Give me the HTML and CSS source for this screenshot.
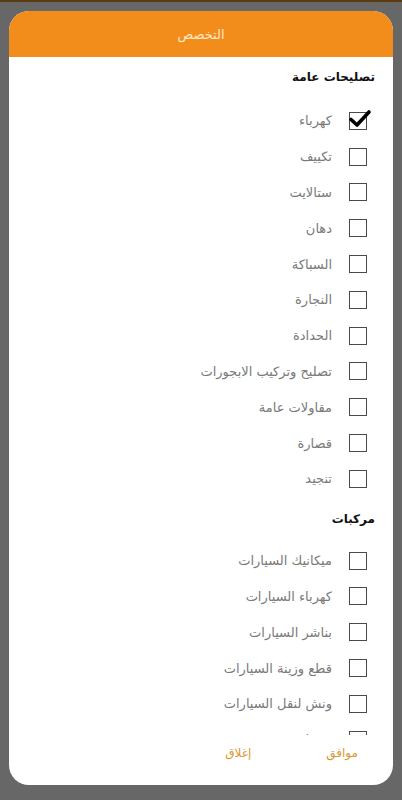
FILE: index.html
```html
<!DOCTYPE html>
<html lang="ar" dir="rtl">
<head>
  <meta charset="UTF-8" />
  <meta name="viewport" content="width=device-width, initial-scale=1.0" />
  <title>التخصص</title>
  <link rel="stylesheet" href="styles.css">
</head>
<body>
  <div class="statusbar"></div>

  <div class="dialog">
    <div class="header">التخصص</div>

    <div class="list">
      <h2 class="section">تصليحات عامة</h2>
      <label class="row"><span class="box checked"><svg viewBox="0 0 24 24" width="24" height="24"><path d="M3 12.5 L9 18 L21 5" fill="none" stroke="#000" stroke-width="3.6" stroke-linecap="round" stroke-linejoin="round"/></svg></span><span class="name">كهرباء</span></label>
      <label class="row"><span class="box"></span><span class="name">تكييف</span></label>
      <label class="row"><span class="box"></span><span class="name">ستالايت</span></label>
      <label class="row"><span class="box"></span><span class="name">دهان</span></label>
      <label class="row"><span class="box"></span><span class="name">السباكة</span></label>
      <label class="row"><span class="box"></span><span class="name">النجارة</span></label>
      <label class="row"><span class="box"></span><span class="name">الحدادة</span></label>
      <label class="row"><span class="box"></span><span class="name">تصليح وتركيب الابجورات</span></label>
      <label class="row"><span class="box"></span><span class="name">مقاولات عامة</span></label>
      <label class="row"><span class="box"></span><span class="name">قصارة</span></label>
      <label class="row"><span class="box"></span><span class="name">تنجيد</span></label>

      <h2 class="section second">مركبات</h2>
      <label class="row"><span class="box"></span><span class="name">ميكانيك السيارات</span></label>
      <label class="row"><span class="box"></span><span class="name">كهرباء السيارات</span></label>
      <label class="row"><span class="box"></span><span class="name">بناشر السيارات</span></label>
      <label class="row"><span class="box"></span><span class="name">قطع وزينة السيارات</span></label>
      <label class="row"><span class="box"></span><span class="name">ونش لنقل السيارات</span></label>
      <label class="row"><span class="box"></span><span class="name">غسيل</span></label>
    </div>

    <div class="actions">
      <button class="action">موافق</button>
      <button class="action">إغلاق</button>
    </div>
  </div>
</body>
</html>
```

FILE: styles.css
```css
body {
  margin: 0;
  height: 800px;
  background: #676767;
  font-family: "DejaVu Sans", sans-serif;
  overflow: hidden;
}
.statusbar {
  height: 2px;
  background: #5a3a10;
}
.dialog {
  margin: 9px 9px 0;
  height: 774px;
  background: #fff;
  border-radius: 20px;
  overflow: hidden;
  display: flex;
  flex-direction: column;
}
.header {
  height: 46px;
  flex: none;
  background: #f28c1a;
  color: #fde8c6;
  font-size: 13px;
  display: flex;
  align-items: center;
  justify-content: center;
}
.list {
  height: 678px;
  flex: none;
  overflow: hidden;
  padding: 8px 18px 0 0;
  box-sizing: border-box;
}
.section {
  margin: 0;
  height: 24px;
  line-height: 24px;
  font-size: 12px;
  font-weight: bold;
  color: #111;
  margin-bottom: 14px;
}
.section.second {
  margin-top: 10px;
  margin-bottom: 12px;
}
.row {
  height: 35.8px;
  display: flex;
  align-items: center;
  gap: 17px;
  padding-right: 8px;
}
.box {
  width: 16px;
  height: 16px;
  border: 1px solid #4a4a4a;
  position: relative;
  flex: none;
}
.box svg {
  position: absolute;
  left: -2px;
  top: -6px;
}
.name {
  font-size: 13px;
  color: #7a7a7a;
}
.actions {
  flex: 1;
  display: flex;
  align-items: flex-start;
  padding: 11px 35px 0 0;
  gap: 75px;
}
.action {
  border: none;
  background: none;
  padding: 0;
  font-family: inherit;
  font-size: 12px;
  color: #d8962e;
}
```
